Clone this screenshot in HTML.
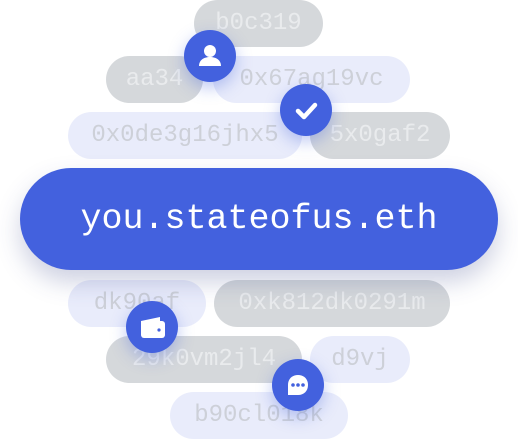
<!DOCTYPE html>
<html><head><style>
html,body{margin:0;padding:0;background:#fff;width:518px;height:440px;overflow:hidden;position:relative}
.p{position:absolute;height:47px;border-radius:24px;font-family:"Liberation Mono",monospace;font-size:24px;line-height:47px;text-align:center}
.g{background:#d5d8db;color:#e9ebed}
.l{background:#e9ecfb;color:#cdd0d8}
.main{position:absolute;left:20px;top:168px;width:478px;height:102px;border-radius:51px;background:#4361de;color:#fff;font-family:"Liberation Mono",monospace;font-size:35px;line-height:102px;text-align:center;box-shadow:0 12px 24px rgba(60,70,140,.25)}
.ic{position:absolute;width:52px;height:52px;border-radius:50%;background:#4361de;box-shadow:0 6px 16px rgba(67,97,222,.35)}
.ic svg{position:absolute;left:0;top:0}
</style></head><body>
<div class="p g" style="left:194px;top:0;width:129px">b0c319</div>
<div class="p g" style="left:106px;top:56px;width:97px">aa34</div>
<div class="p l" style="left:213px;top:56px;width:197px">0x67ag19vc</div>
<div class="p l" style="left:68px;top:112px;width:234px">0x0de3g16jhx5</div>
<div class="p g" style="left:310px;top:112px;width:140px">5x0gaf2</div>
<div class="p l" style="left:68px;top:280px;width:138px">dk90af</div>
<div class="p g" style="left:214px;top:280px;width:236px">0xk812dk0291m</div>
<div class="p g" style="left:106px;top:336px;width:196px">29k0vm2jl4</div>
<div class="p l" style="left:310px;top:336px;width:100px">d9vj</div>
<div class="p l" style="left:170px;top:392px;width:178px">b90cl018k</div>
<div class="main">you.stateofus.eth</div>
<div class="ic" style="left:184px;top:30px"><svg width="52" height="52"><circle cx="26" cy="21" r="6" fill="#fff"/><path d="M15 36c0-6 5-9 11-9s11 3 11 9z" fill="#fff"/></svg></div>
<div class="ic" style="left:280px;top:84px"><svg width="52" height="52"><path d="M18 27l6 6 11-12" stroke="#fff" stroke-width="4.5" fill="none" stroke-linecap="round" stroke-linejoin="round"/></svg></div>
<div class="ic" style="left:126px;top:301px"><svg width="52" height="52"><path d="M15 20h21a3 3 0 0 1 3 3v11a3 3 0 0 1-3 3H18a3 3 0 0 1-3-3z" fill="#fff"/><path d="M15 20l19-4v4z" fill="#fff"/><circle cx="33" cy="29" r="1.6" fill="#4361de"/></svg></div>
<div class="ic" style="left:272px;top:359px"><svg width="52" height="52"><path d="M26 16c6 0 10 4 10 10s-4 10-10 10H16V26c0-6 4-10 10-10z" fill="#fff"/><circle cx="21" cy="26" r="1.8" fill="#4361de"/><circle cx="26" cy="26" r="1.8" fill="#4361de"/><circle cx="31" cy="26" r="1.8" fill="#4361de"/></svg></div>
</body></html>
